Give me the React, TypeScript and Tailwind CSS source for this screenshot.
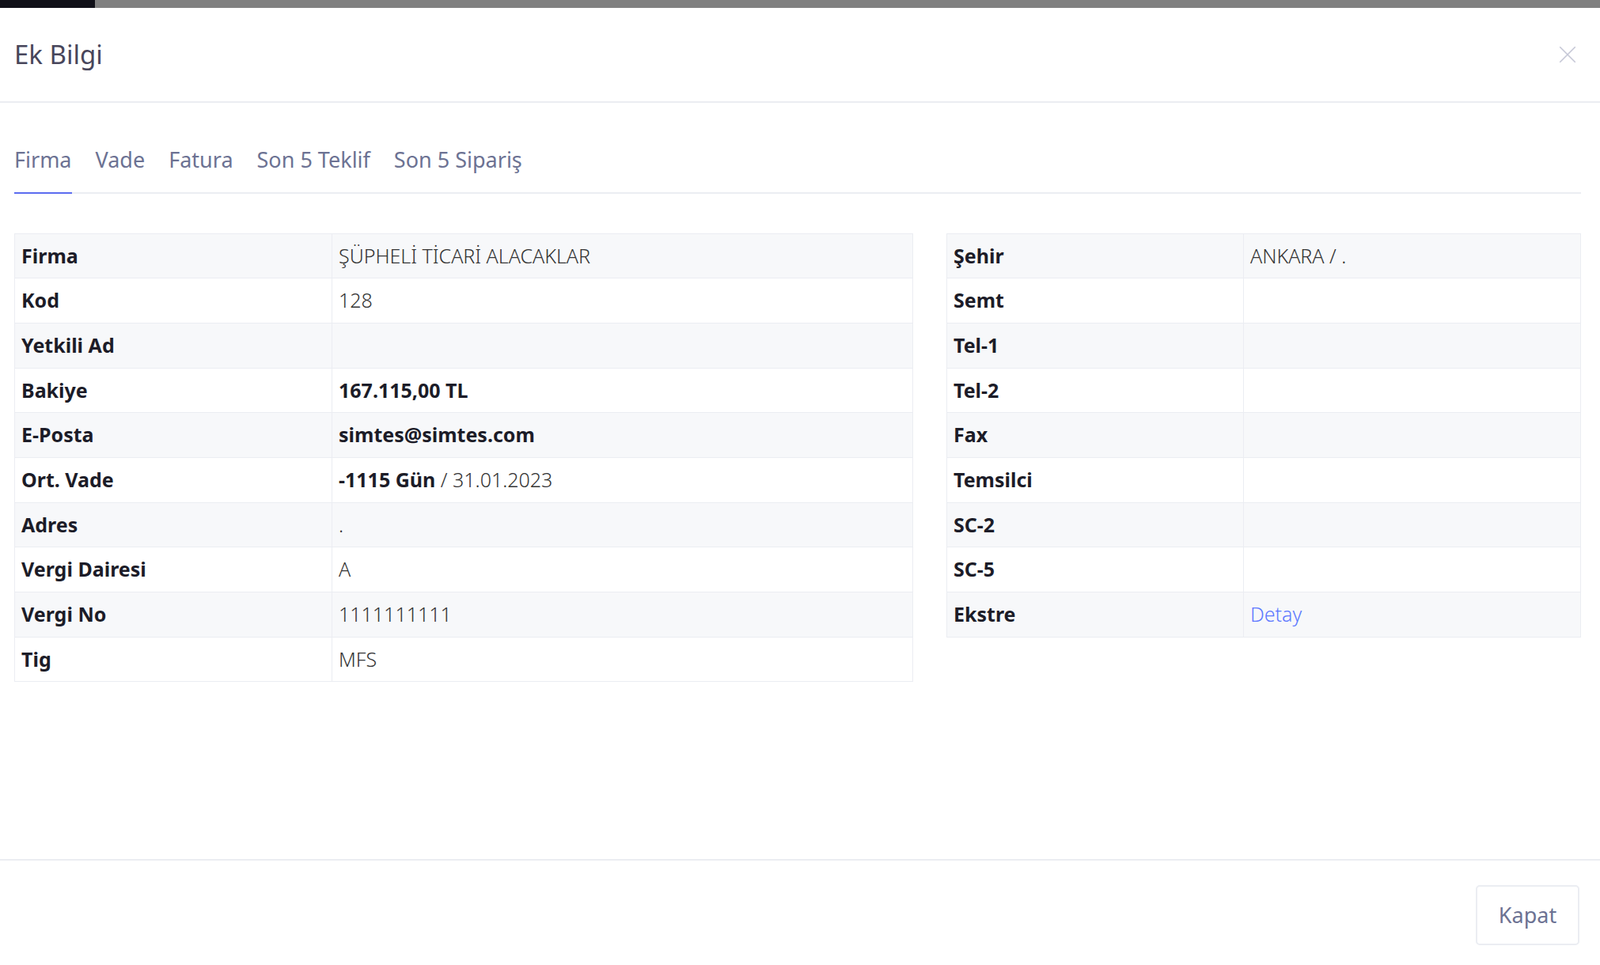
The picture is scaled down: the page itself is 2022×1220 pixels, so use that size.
import React from 'react';

const left: [string, React.ReactNode][] = [
  ['Firma', 'ŞÜPHELİ TİCARİ ALACAKLAR'],
  ['Kod', '128'],
  ['Yetkili Ad', ''],
  ['Bakiye', <span className="font-bold text-[#1c1c28]">167.115,00 TL</span>],
  ['E-Posta', <span className="font-bold text-[#1c1c28]">simtes@simtes.com</span>],
  ['Ort. Vade', <><span className="font-bold text-[#1c1c28]">-1115 Gün</span> / 31.01.2023</>],
  ['Adres', '.'],
  ['Vergi Dairesi', 'A'],
  ['Vergi No', '1111111111'],
  ['Tig', 'MFS'],
];

const right: [string, React.ReactNode][] = [
  ['Şehir', 'ANKARA / .'],
  ['Semt', ''],
  ['Tel-1', ''],
  ['Tel-2', ''],
  ['Fax', ''],
  ['Temsilci', ''],
  ['SC-2', ''],
  ['SC-5', ''],
  ['Ekstre', <span className="text-[#5d78ff]">Detay</span>],
];

const InfoTable = ({ rows, split }: { rows: [string, React.ReactNode][]; split: string }) => (
  <table className="w-full border-collapse border border-[#ebedf2] text-[25px]">
    <tbody>
      {rows.map(([k, v], i) => (
        <tr key={k} className={i % 2 === 0 ? 'bg-[#f7f8fa]' : 'bg-white'}>
          <td className={`${split} h-[56.7px] border border-[#ebedf2] px-[8px] font-bold text-[#1c1c28]`}>{k}</td>
          <td className="h-[56.7px] border border-[#ebedf2] px-[8px] font-light text-[#333]">{v}</td>
        </tr>
      ))}
    </tbody>
  </table>
);

export default function App() {
  const tabs = ['Firma', 'Vade', 'Fatura', 'Son 5 Teklif', 'Son 5 Sipariş'];
  return (
    <div className="flex min-h-[1220px] flex-col bg-white font-['Inter',sans-serif]">
      <div className="flex h-[10px]">
        <div className="w-[120px] bg-[#101018]" />
        <div className="flex-1 bg-[#808080]" />
      </div>
      <div className="flex h-[120px] items-center justify-between border-b-2 border-[#ebedf2] px-[18px]">
        <h1 className="text-[33px] text-[#48465b]">Ek Bilgi</h1>
        <svg width="26" height="26" viewBox="0 0 24 24" className="mr-[10px] text-[#c5c7d6]" stroke="currentColor" strokeWidth="1.5" fill="none">
          <path d="M3 3l18 18M21 3L3 21" />
        </svg>
      </div>
      <div className="flex-1 px-[18px] pt-[52px]">
        <div className="mr-[6px] flex gap-[30px] border-b-2 border-[#ebedf2]">
          {tabs.map((t, i) => (
            <div
              key={t}
              className={`-mb-[2px] pb-[20px] text-[27px] ${i === 0 ? 'border-b-2 border-[#5b6cf0] text-[#6c7293]' : 'text-[#6c7293]'}`}
            >
              {t}
            </div>
          ))}
        </div>
        <div className="mt-[50px] flex items-start gap-[42px]">
          <div className="w-[1136px]">
            <InfoTable rows={left} split="w-[401px]" />
          </div>
          <div className="flex-1 pr-[6px]">
            <InfoTable rows={right} split="w-[375px]" />
          </div>
        </div>
      </div>
      <div className="mt-[0px] flex h-[134px] items-start justify-end border-t-2 border-[#ebedf2] px-[26px] pt-[31px]">
        <button className="h-[76px] w-[131px] rounded-[5px] border-2 border-[#ebedf2] text-[27px] text-[#6c7293]">Kapat</button>
      </div>
    </div>
  );
}
